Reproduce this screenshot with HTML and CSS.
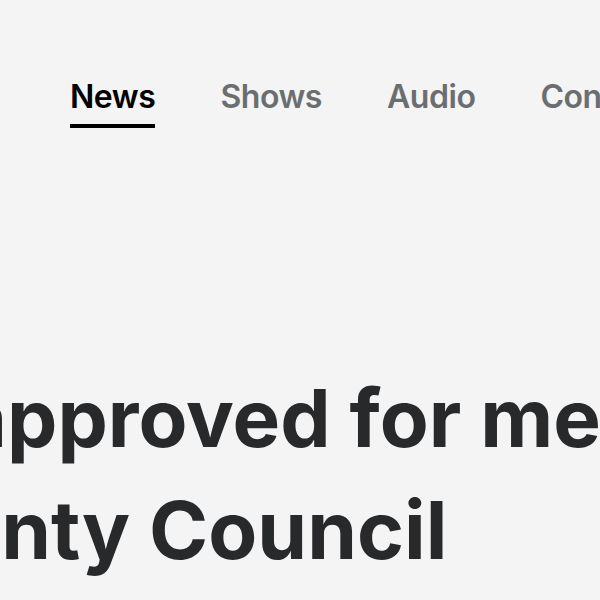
FILE: index.html
```html
<!DOCTYPE html>
<html lang="en">
<head>
<meta charset="utf-8">
<title>News</title>
<link rel="stylesheet" href="styles.css">
</head>
<body>
<div class="page">
  <nav class="tabs">
    <a class="tab tab-active" href="#">News</a>
    <a class="tab" href="#">Shows</a>
    <a class="tab" href="#">Audio</a>
    <a class="tab" href="#">Contact</a>
  </nav>
  <h1 class="headline">Plans approved for meeting hall<br>by County Council</h1>
</div>
</body>
</html>
```
FILE: styles.css
```css
html, body {
  margin: 0;
  padding: 0;
  background: #f4f4f4;
}
.page {
  width: 600px;
  height: 600px;
  overflow: hidden;
  font-family: Inter, "Noto Sans", sans-serif;
}
.tabs {
  display: flex;
  gap: 65px;
  padding: 77px 0 0 70px;
  white-space: nowrap;
}
.tab {
  font-size: 32px;
  font-weight: 600;
  line-height: 40px;
  letter-spacing: -0.45px;
  color: #6b6e71;
  text-decoration: none;
  padding-bottom: 7px;
  border-bottom: 4px solid transparent;
}
.tab-active {
  color: #000000;
  border-bottom-color: #000000;
}
.headline {
  margin: 234px 0 0 -273px;
  font-size: 80px;
  font-weight: 700;
  line-height: 112px;
  color: #28292b;
  white-space: nowrap;
}
```
